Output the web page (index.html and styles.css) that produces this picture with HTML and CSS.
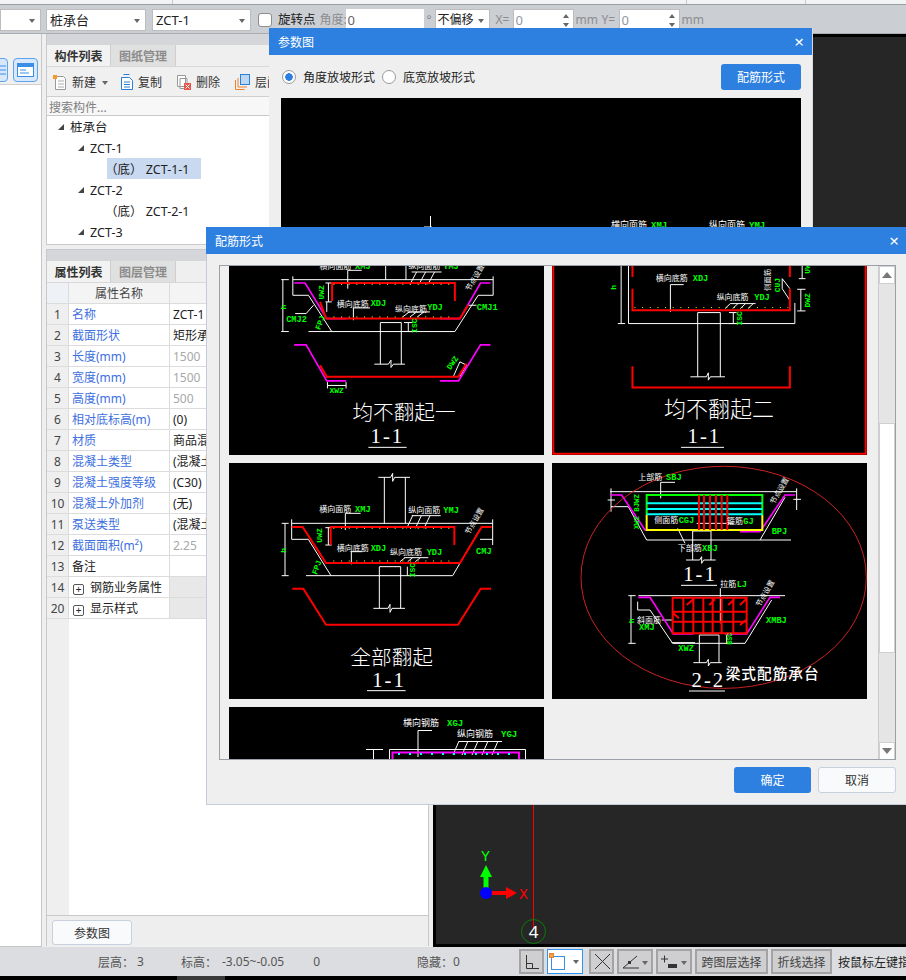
FILE: index.html
```html
<!DOCTYPE html>
<html lang="zh-CN">
<head>
<meta charset="utf-8">
<title>参数图</title>
<link rel="stylesheet" href="styles.css">
</head>
<body>
<div class="app">
  <div class="topstrip"><i class="tick t1"></i><i class="tick t2"></i><i class="tick t3"></i></div>
  <div class="toolbar">
    <div class="sel s1"><b class="caret"></b></div>
    <div class="sel s2"><span>桩承台</span><b class="caret"></b></div>
    <div class="sel s3"><span>ZCT-1</span><b class="caret"></b></div>
    <span class="check"></span>
    <span class="tlabel">旋转点</span>
    <span class="tlabel muted ang">角度:</span>
    <div class="inp i1">0</div>
    <span class="muted deg">°</span>
    <div class="sel s4"><span>不偏移</span><b class="caret"></b></div>
    <span class="muted xl">X=</span>
    <div class="inp i2">0<em class="spin"></em></div>
    <span class="muted mm">mm</span>
    <span class="muted yl">Y=</span>
    <div class="inp i2">0<em class="spin"></em></div>
    <span class="muted mm">mm</span>
  </div>

  <div class="main">
    <aside class="side">
      <div class="side-top">
        <span class="sbtn sb1"><svg width="12" height="14" viewBox="0 0 12 14"><path d="M2 3h9M2 7h9M2 11h9" stroke="#3a8ee6" fill="none"/></svg></span>
        <span class="sbtn sb2"><svg width="17" height="14" viewBox="0 0 17 14"><rect x=".5" y=".5" width="16" height="13" fill="#fff" stroke="#3a8ee6"/><rect x="1" y="1" width="15" height="3" fill="#3a8ee6"/><path d="M3 7h6M3 10h9" stroke="#3a8ee6" fill="none"/></svg></span>
      </div>
    </aside>

    <div class="panels">
      <section class="panel p1">
        <div class="phead"></div>
        <div class="tabs"><span class="tab on">构件列表</span><span class="tab">图纸管理</span></div>
        <div class="tools">
          <span class="tool tnew"><svg width="16" height="16" viewBox="0 0 16 16"><path d="M3.500 2.500h8l2 2v11h-10z" fill="#fff" stroke="#999"/><path d="M6 7h6M6 10h6M6 13h6" stroke="#aaa"/><rect x="1" y="1" width="4" height="4" fill="#f39a2e"/></svg>新建<b class="caret dark"></b></span>
          <span class="tool tcopy"><svg width="14" height="16" viewBox="0 0 14 16"><path d="M1.500 3.500h8l3 3v9h-11z" fill="#fff" stroke="#2c7fd6"/><path d="M3.500 .5h6" stroke="#2c7fd6"/><path d="M4 8h6M4 10.500h6M4 13h6" stroke="#2c7fd6"/></svg>复制</span>
          <span class="tool tdel"><svg width="15" height="16" viewBox="0 0 15 16"><path d="M.5 1.500h8v11h-8zM3 4.500h7v10H3z" fill="#fff" stroke="#999"/><rect x="7" y="9" width="7" height="7" fill="#e8534a"/><path d="M8.500 10.500l4 4m0-4l-4 4" stroke="#fff"/></svg>删除</span>
          <span class="tool tfloor"><svg width="15" height="16" viewBox="0 0 15 16"><path d="M.5 6v9.500h9M3 4v9h9" stroke="#f0812a" fill="none"/><rect x="5.500" y=".5" width="9" height="10" fill="#bcd6f5" stroke="#2c7fd6"/></svg>层间</span>
        </div>
        <div class="search">搜索构件...</div>
        <ul class="tree">
          <li class="l0"><b class="tri"></b>桩承台</li>
          <li class="l1"><b class="tri"></b>ZCT-1</li>
          <li class="l2"><span class="picked">（底） ZCT-1-1</span></li>
          <li class="l1"><b class="tri"></b>ZCT-2</li>
          <li class="l2"><span>（底） ZCT-2-1</span></li>
          <li class="l1"><b class="tri"></b>ZCT-3</li>
        </ul>
      </section>

      <section class="panel p2">
        <div class="phead"></div>
        <div class="tabs"><span class="tab on">属性列表</span><span class="tab">图层管理</span></div>
        <div class="grid">
          <div class="row head"><span class="n"></span><span class="k">属性名称</span><span class="v"></span></div>
          <div class="row"><span class="n">1</span><span class="k link">名称</span><span class="v">ZCT-1</span></div>
          <div class="row"><span class="n">2</span><span class="k link">截面形状</span><span class="v">矩形承台</span></div>
          <div class="row"><span class="n">3</span><span class="k link">长度(mm)</span><span class="v dim">1500</span></div>
          <div class="row"><span class="n">4</span><span class="k link">宽度(mm)</span><span class="v dim">1500</span></div>
          <div class="row"><span class="n">5</span><span class="k link">高度(mm)</span><span class="v dim">500</span></div>
          <div class="row"><span class="n">6</span><span class="k link">相对底标高(m)</span><span class="v">(0)</span></div>
          <div class="row"><span class="n">7</span><span class="k link">材质</span><span class="v">商品混凝土</span></div>
          <div class="row"><span class="n">8</span><span class="k link">混凝土类型</span><span class="v">(混凝土)</span></div>
          <div class="row"><span class="n">9</span><span class="k link">混凝土强度等级</span><span class="v">(C30)</span></div>
          <div class="row"><span class="n">10</span><span class="k link">混凝土外加剂</span><span class="v">(无)</span></div>
          <div class="row"><span class="n">11</span><span class="k link">泵送类型</span><span class="v">(混凝土泵)</span></div>
          <div class="row"><span class="n">12</span><span class="k link">截面面积(m²)</span><span class="v dim">2.25</span></div>
          <div class="row"><span class="n">13</span><span class="k">备注</span><span class="v"></span></div>
          <div class="row grp"><span class="n">14</span><span class="k"><b class="plus">+</b>钢筋业务属性</span><span class="v"></span></div>
          <div class="row grp"><span class="n">20</span><span class="k"><b class="plus">+</b>显示样式</span><span class="v"></span></div>
          <div class="rest"><span class="n"></span></div>
        </div>
        <div class="pfoot"><button class="btn-plain pbtn">参数图</button></div>
      </section>
    </div>

    <div class="canvas">
      <svg class="axes" width="80" height="70" viewBox="0 0 80 70">
        <path d="M23 33v20" stroke="#0f0" stroke-width="5"/>
        <path d="M23 25l-6 12h12z" fill="#0f0"/>
        <path d="M23 53h22" stroke="#f00" stroke-width="4"/>
        <path d="M43 47l11 6-11 6z" fill="#f00"/>
        <circle cx="23" cy="53" r="6" fill="#00f"/>
        <text class="ax axy" x="18" y="21">Y</text>
        <text class="ax axx" x="56" y="59">X</text>
      </svg>
      <div class="gridline"></div>
      <div class="bubble">4</div>
    </div>
  </div>

  <div class="status">
    <span class="st a">层高：</span><span class="st b">3</span>
    <span class="st c">标高：</span><span class="st d">-3.05~-0.05</span>
    <span class="st e">0</span>
    <span class="st f">隐藏：</span><span class="st g">0</span>
    <span class="sb ortho"><svg width="16" height="16" viewBox="0 0 16 16"><path d="M2.500 1v13.500H15M2.500 9.500h6v5" stroke="#333" fill="none"/></svg></span>
    <span class="sb snap"><svg width="18" height="18" viewBox="0 0 18 18"><rect x="2.500" y="3.500" width="13" height="13" fill="none" stroke="#3a8ee6"/><rect x=".5" y=".5" width="4" height="4" fill="#f5a04a" stroke="#e8812a"/></svg><b class="caret dark"></b></span>
    <span class="sb cross"><svg width="17" height="17" viewBox="0 0 17 17"><path d="M1 1l15 15M16 1L1 16" stroke="#333" fill="none"/></svg></span>
    <span class="sb angle"><svg width="17" height="14" viewBox="0 0 17 14"><path d="M1 13L15 1M1 13h16" stroke="#333" fill="none"/><rect x="6" y="6" width="3" height="3" fill="#333"/></svg><b class="caret dark"></b></span>
    <span class="sb elev"><svg width="17" height="14" viewBox="0 0 17 14"><path d="M0 4h7M3.500 .5v7" stroke="#333" fill="none"/><rect x="7" y="9" width="9" height="4" fill="#333"/></svg><b class="caret dark"></b></span>
    <span class="sb tx cl">跨图层选择</span>
    <span class="sb tx pl">折线选择</span>
    <span class="hint">按鼠标左键指定</span>
  </div>
  <div class="taskbar"><i></i></div>

  <div class="dialog d-param">
    <header class="dtitle"><span>参数图</span><span class="x">×</span></header>
    <div class="dopts">
      <span class="radio on"></span><span class="rlabel">角度放坡形式</span>
      <span class="radio"></span><span class="rlabel">底宽放坡形式</span>
      <button class="btn-blue rebar">配筋形式</button>
    </div>
    <div class="preview">
      <svg width="520" height="130" viewBox="281 98 520 130">
        <path class="w1" d="M430.500 216v11M424 227h8"/>
        <text class="cadw s9" x="611" y="228">横向面筋</text><text class="cadg s9" x="651" y="228">XMJ</text>
        <text class="cadw s9" x="709" y="228">纵向面筋</text><text class="cadg s9" x="749" y="228">YMJ</text>
      </svg>
    </div>
  </div>

  <div class="dialog d-rebar">
    <header class="dtitle"><span>配筋形式</span><span class="x">×</span></header>
    <div class="rbody">
      <div class="scroller">
        <div class="cards">
          <div class="card c-a">
            <svg width="315" height="189" viewBox="27 17 945 568">
              <g class="w3">
                <path d="M218 58H820M497 17V58M558 17V58M183 58H206M183 214H206M188 58V214M218 48V105H265L335 214M820 48V105H775L705 214M265 214H705"/>
                <path d="M481 312V187H544V312M463 312H505L513 300V322L520 312H555M565 187V214M552 187H578M552 214H578"/>
                <path d="M322 366V385M378 366V385M322 376H378M320 125V155M316 68H335M316 125H335M325 68V125"/>
                <path d="M383 85V30H425M400 180V143H450M570 72L590 35M597 72L617 35M624 72L644 35M575 35H665M548 170L568 155M570 170L590 155M592 170L612 155M562 155H630M225 160H258L280 135M745 135H770M700 350L720 305L740 315L720 350"/>
              </g>
              <g class="m5"><path d="M222 68H255L320 175H378M660 175H720L782 68H812M222 254H258L320 362H378M660 362H716L782 254H812"/></g>
              <g class="r5"><path d="M336 122V68H705V122M300 125L318 175H720L745 135M300 315L320 350H715L740 310"/></g>
              <path class="dots" d="M340 72H700M340 170H700"/>
              <text class="cadw s24" x="298" y="26">横向面筋</text><text class="cadw s24" x="565" y="26">纵向面筋</text><text class="cadg s26" x="405" y="26">XMJ</text><text class="cadg s26" x="670" y="26">YMJ</text>
              <text class="cadw s24" x="350" y="140">横向底筋</text><text class="cadg s26" x="452" y="138">XDJ</text>
              <text class="cadw s24" x="525" y="156">纵向底筋</text><text class="cadg s26" x="622" y="150">YDJ</text>
              <text class="cadg s26" x="771" y="150">CMJ1</text><text class="cadg s26" x="198" y="186">CMJ2</text>
              <text class="cadg s24" x="328" y="400">XWZ</text>
              <text class="cadg s24" transform="translate(312 118) rotate(-90)">UWZ</text>
              <text class="cadg s24" transform="translate(196 148) rotate(-90)">h</text>
              <text class="cadg s24" transform="translate(300 210) rotate(-70)">FPJ</text>
              <text class="cadg s24" transform="translate(590 218) rotate(-90)">ISC</text>
              <text class="cadg s24" transform="translate(692 330) rotate(-55)">DWZ</text>
              <text class="cadw s22" transform="translate(750 94) rotate(-60)">节点设置</text>
              <text class="cap s62" x="552" y="480">均不翻起一</text>
              <text class="capn" x="502" y="549">1-1</text>
              <path class="w3" d="M445 562H560"/>
            </svg>
          </div>
          <div class="card c-b">
            <svg width="315" height="189" viewBox="21 17 945 568">
              <g class="w3">
                <path d="M250 17V190H750V128M228 17V190M218 190H240M458 350V157H526V350M436 350H484L490 338V360L496 350H540M565 157V190M552 157H575M552 190H575"/>
                <path d="M768 87V152M757 87H782M757 152H782M772 17V55M762 55H782M376 155V73H416M540 145L556 130M563 145L579 130M586 145L602 130M609 145L625 130M556 130H632M712 55L735 85M712 85L735 120M712 55V85"/>
              </g>
              <g class="r5"><path d="M262 17V50M262 85V150H735V85M735 17V50M262 318V382H735V318"/></g>
              <path class="dots" d="M268 142H730"/>
              <text class="cadw s24" x="332" y="63">横向底筋</text><text class="cadg s26" x="443" y="63">XDJ</text>
              <text class="cadw s24" x="515" y="119">纵向底筋</text><text class="cadg s26" x="628" y="119">YDJ</text>
              <text class="cadg s24" transform="translate(212 88) rotate(-90)">h</text>
              <text class="cadg s24" transform="translate(590 196) rotate(-90)">ISC</text>
              <text class="cadg s24" transform="translate(796 142) rotate(-90)">DWZ</text>
              <text class="cadg s24" transform="translate(796 40) rotate(-90)">UWY</text>
              <text class="cadg s24" transform="translate(704 96) rotate(-90)">CUJ</text>
              <text class="cadw s22" transform="translate(676 92) rotate(-90)">侧面筋</text>
              <text class="cap s66" x="522" y="470">均不翻起二</text>
              <text class="capn" x="478" y="548">1-1</text>
              <path class="w3" d="M408 562H537"/>
              <path class="redframe" d="M24 17V581H963V17"/>
            </svg>
          </div>
          <div class="card c-c">
            <svg width="315" height="236" viewBox="27 9 945 708">
              <g class="w3">
                <path d="M215 190H818M493 190V52M556 190V52M475 52H512L518 40V64L524 52H570M195 190V347M185 190H206M185 347H206M215 178V238H265L333 347M818 178V255M818 238H780M780 207L698 347M258 347H698"/>
                <path d="M478 445V320H542V445M460 445H504L510 433V457L516 445H555M562 320V347M376 210V160H422M394 313V275H428M560 205L578 167M586 205L604 167M612 205L630 167M575 167H662M540 305L555 293M563 305L578 293M586 305L601 293M553 293H625M325 203V255M316 203H335M316 255H335"/>
              </g>
              <g class="r5"><path d="M215 201H248L318 309H720L785 201H815M332 255V201H703V255M217 386H250L318 494H714L782 386H813"/></g>
              <path class="dots" d="M340 205H700M340 303H700"/>
              <text class="cadw s24" x="298" y="155">横向面筋</text><text class="cadg s26" x="405" y="155">XMJ</text>
              <text class="cadw s24" x="565" y="158">纵向面筋</text><text class="cadg s26" x="670" y="158">YMJ</text>
              <text class="cadw s24" x="350" y="272">横向底筋</text><text class="cadg s26" x="452" y="272">XDJ</text>
              <text class="cadw s24" x="510" y="284">纵向底筋</text><text class="cadg s26" x="620" y="284">YDJ</text>
              <text class="cadg s26" x="768" y="281">CMJ</text>
              <text class="cadg s24" transform="translate(306 248) rotate(-90)">UWZ</text>
              <text class="cadg s24" transform="translate(198 278) rotate(-90)">h</text>
              <text class="cadg s24" transform="translate(290 345) rotate(-70)">FPJ</text>
              <text class="cadg s24" transform="translate(586 352) rotate(-90)">ISC</text>
              <text class="cadw s22" transform="translate(748 225) rotate(-60)">节点设置</text>
              <text class="cap s62" x="515" y="614">全部翻起</text>
              <text class="capn" x="507" y="681">1-1</text>
              <path class="w3" d="M441 692H557"/>
            </svg>
          </div>
          <div class="card c-d">
            <svg width="315" height="236" viewBox="21 9 945 708">
              <g class="w3">
                <path d="M195 95H755M198 85V155M755 85V150M188 120H210M745 118H768M198 140H250L305 240H738M720 112L645 240M443 300V213H498V300M423 300H464L470 290V310L476 300H512M347 115V67H390M398 205L420 250M455 190H565"/>
                <path d="M280 407H720M258 407V550M250 407H272M250 550H272M278 425V450H315L383 550H600L680 420M463 608V525H522V608M445 608H484L490 598V618L496 608H530M526 490V385M380 548H450M545 525V552M350 480H385"/>
              </g>
              <g class="m5"><path d="M197 105H230L300 210H360M585 215H645L720 105H750M280 412H315L385 522H445M540 522H605L675 412H705"/></g>
              <g class="gr5"><path d="M305 165V105H652V165"/></g>
              <g class="ye5"><path d="M305 165V210H652V165"/></g>
              <g class="cy5"><path d="M305 130H652M305 147H652M305 163H652"/></g>
              <g class="r5"><path d="M462 105V210M477 105V210M495 105V210M513 105V210M530 105V210M547 105V210M383 413H605V520H383ZM415 413V520M445 413V520M475 413V520M503 413V520M530 413V520M565 413V520M383 455H605M383 485H605M425 435L445 418M493 435L510 418M550 435L568 418M585 435L603 418M385 460L402 475M585 495L603 480"/></g>
              <path class="ell" d="M108 352A428 333 0 1 0 964 352A428 333 0 1 0 108 352Z"/>
              <text class="cadw s24" x="280" y="61">上部筋</text><text class="cadg s26" x="363" y="61">SBJ</text>
              <text class="cadw s24" x="328" y="189">侧面筋</text><text class="cadg s26" x="401" y="189">CGJ</text>
              <text class="cadw s24" x="546" y="191">箍筋</text><text class="cadg s26" x="595" y="191">GJ</text>
              <text class="cadw s24" x="398" y="273">下部筋</text><text class="cadg s26" x="471" y="273">XBJ</text>
              <text class="cadg s26" x="680" y="221">BPJ</text>
              <text class="cadg s22" transform="translate(282 208) rotate(-90)">XWZ BJWZ</text>
              <text class="cadw s22" transform="translate(688 134) rotate(-60)">节点设置</text>
              <text class="capn" x="465" y="362">1-1</text>
              <path class="w3" d="M408 376H516"/>
              <text class="cadw s24" x="526" y="381">拉筋</text><text class="cadg s26" x="575" y="381">LJ</text>
              <text class="cadw s24" x="276" y="488">斜面筋</text><text class="cadg s26" x="282" y="511">XMJ</text>
              <text class="cadg s26" x="663" y="490">XMBJ</text><text class="cadg s26" x="400" y="574">XWZ</text>
              <text class="cadg s24" transform="translate(266 490) rotate(-90)">h</text>
              <text class="cadg s20" transform="translate(562 554) rotate(-90)">BSC</text>
              <text class="cadw s22" transform="translate(645 442) rotate(-60)">节点设置</text>
              <text class="capn" x="490" y="680">2-2</text>
              <path class="w3" d="M432 693H540"/>
              <text class="title44" x="542" y="658">梁式配筋承台</text>
            </svg>
          </div>
          <div class="card c-e">
            <svg width="315" height="53" viewBox="229 707 315 53">
              <text class="cadw s9" x="403" y="726">横向钢筋</text><text class="cadg s9" x="447" y="726">XGJ</text>
              <text class="cadw s9" x="457" y="737">纵向钢筋</text><text class="cadg s9" x="501" y="737">YGJ</text>
              <path class="w1" d="M418 757V730.500H432M459 741.500H502M453 755L459 741M462 755L468 741M472 755L478 741M482 755L488 741M492 755L498 741M366 749.500H383M373.500 749V760M389.500 760V749.500H525.500V760"/>
              <path class="m2" d="M392.500 760V752.500H519V760"/>
              <path class="dotc" d="M398 754H518"/>
            </svg>
          </div>
        </div>
        <div class="scrollbar">
          <span class="sc-btn"><b class="up"></b></span>
          <span class="sc-track t-a"></span>
          <span class="sc-thumb"></span>
          <span class="sc-track t-b"></span>
          <span class="sc-btn"><b class="down"></b></span>
        </div>
      </div>
      <div class="dfoot">
        <button class="btn-blue ok">确定</button>
        <button class="btn-plain cancel">取消</button>
      </div>
    </div>
  </div>
</div>
</body>
</html>
```
FILE: styles.css
```css
* { box-sizing: border-box; }
html, body { margin: 0; padding: 0; }
body { font-family: "Noto Sans", "Noto Sans CJK SC", sans-serif; font-size: 12px; color: #222; background: #fff; }
svg { display: block; }
.app { position: relative; width: 906px; height: 980px; overflow: hidden; display: flex; flex-direction: column; background: #efefef; }

/* top */
.topstrip { position: relative; height: 5px; background: #f2f3f4; border-bottom: 1px solid #9a9ea3; flex: none; }
.tick { position: absolute; top: 0; width: 1px; height: 4px; background: #c8c8c8; }
.t1 { left: 172px; } .t2 { left: 686px; } .t3 { left: 805px; }
.toolbar { height: 29px; flex: none; display: flex; align-items: flex-start; padding-top: 4px; background: #cbced2; border-bottom: 1px solid #a9acb0; font-size: 13px; white-space: nowrap; }
.toolbar > * { flex: none; }
.sel { position: relative; height: 22px; background: #fff; border: 1px solid #bdbdbd; line-height: 20px; padding-left: 3px; }
.caret { position: absolute; right: 5px; top: 9px; width: 0; height: 0; border: 3.500px solid transparent; border-top: 4px solid #666; border-bottom: 0; }
.s1 { width: 41px; } .s2 { width: 100px; margin-left: 5px; } .s3 { width: 99px; margin-left: 6px; }
.s4 { width: 55px; padding-left: 2px; font-size: 12px; }
.check { width: 14px; height: 14px; margin: 4px 0 0 7px; border: 1px solid #8d8d8d; border-radius: 3px; background: #fff; }
.tlabel { line-height: 22px; }
.check + .tlabel { margin-left: 6px; font-size: 12.500px; }
.muted { color: #8b8d90; line-height: 22px; font-size: 12px; }
.ang { margin-left: 4px; width: 26px; }
.inp { position: relative; height: 22px; background: #fff; line-height: 22px; padding-left: 2px; color: #666; }
.i1 { width: 78px; }
.i2 { width: 61px; border: 1px solid #bdbdbd; line-height: 20px; color: #8f99a5; }
.spin { position: absolute; right: 3px; top: 3px; width: 7px; height: 14px; }
.spin::before, .spin::after { content: ""; position: absolute; left: 0; width: 0; height: 0; border-left: 3.500px solid transparent; border-right: 3.500px solid transparent; }
.spin::before { top: 1px; border-bottom: 4px solid #666; }
.spin::after { bottom: 0; border-top: 4px solid #666; }
.deg { margin-left: 3px; width: 8px; }
.xl { margin-left: 6px; width: 17px; }
.yl { margin-left: 2px; width: 17px; }
.mm { margin-left: 2px; width: 24px; }

/* main */
.main { flex: 1; display: flex; min-height: 0; }
.side { width: 42px; flex: none; background: #fff; border-right: 1px solid #c6c6c6; border-bottom: 1px solid #c6c6c6; height: 913px; }
.side-top { position: relative; height: 51px; background: #f0f0f0; border-bottom: 1px solid #d0d0d0; overflow: hidden; }
.sbtn { position: absolute; top: 24px; height: 24px; border: 1px solid #5aa5ee; border-radius: 4px; background: #d8e8fa; display: flex; align-items: center; justify-content: center; }
.sb1 { left: -6px; width: 14px; }
.sb2 { left: 13px; width: 25px; }
.panels { width: 383px; margin-left: 4px; flex: none; display: flex; flex-direction: column; gap: 4px; }
.panel { display: flex; flex-direction: column; background: #efefef; }
.p1 { height: 211px; border: 1px solid #c6c9cd; border-top: 0; }
.p2 { height: 697px; border-left: 1px solid #c6c9cd; border-right: 1px solid #c6c9cd; border-top: 1px solid #c6c9cd; }
.phead { height: 11px; background: #d4d6da; flex: none; }
.tabs { height: 22px; display: flex; flex: none; border-bottom: 1px solid #d8d8d8; }
.tab { width: 65px; text-align: center; line-height: 24px; color: #8c8c8c; background: #e0e0e0; border-right: 1px solid #cfcfcf; font-size: 12px; font-weight: 700; }
.tab.on { width: 64px; background: #f2f2f2; color: #333; }
.tools { position: relative; height: 30px; flex: none; background: #f0f0f0; border-bottom: 1px solid #cfcfcf; }
.tool { position: absolute; top: 7px; display: flex; align-items: center; gap: 4px; height: 16px; color: #333; white-space: nowrap; }
.tnew { left: 5px; } .tcopy { left: 73px; gap: 4px; } .tdel { left: 130px; gap: 4px; } .tfloor { left: 188px; gap: 5px; }
.tnew .caret { right: -12px; top: 7px; }
.search { height: 19px; flex: none; line-height: 21px; padding-left: 2px; color: #808080; background: #f7f7f7; border-bottom: 1px solid #c9c9c9; }
.tree { list-style: none; margin: 0; padding: 0; flex: 1; background: #fff; font-size: 12.500px; }
.tree li { position: relative; height: 21px; line-height: 23px; white-space: nowrap; }
.l0 { padding-left: 23px; } .l1 { padding-left: 43px; } .l2 { padding-left: 60px; }
.tri { position: absolute; top: 8px; width: 0; height: 0; border-bottom: 6px solid #444; border-left: 6px solid transparent; }
.l0 .tri { left: 11px; } .l1 .tri { left: 31px; }
.tree .l2 span { display: inline-block; height: 21px; text-indent: -2px; }
.tree .picked { background: #c9d9f0; width: 94px; }

/* grid */
.grid { flex: 1; display: flex; flex-direction: column; background: #fff; border-bottom: 1px solid #c6c9cd; min-height: 0; }
.row { height: 21px; flex: none; display: flex; line-height: 22px; font-size: 12px; }
.n { width: 22px; flex: none; text-align: center; background: #efefef; color: #444; border-right: 1px solid #dcdcdc; border-bottom: 1px solid #dcdcdc; }
.k { width: 101px; flex: none; padding-left: 3px; border-right: 1px solid #dcdcdc; border-bottom: 1px solid #dcdcdc; white-space: nowrap; }
.v { flex: 1; padding-left: 3px; border-bottom: 1px solid #dcdcdc; white-space: nowrap; overflow: hidden; }
.head .n { background: #eef1f6; }
.head .k { text-align: center; background: #f4f4f4; padding: 0; color: #444; }
.head .v { background: #f4f4f4; }
.link { color: #3d6fe0; }
.dim { color: #a8a8a8; }
.grp .v { background: #e8e8e8; }
.plus { display: inline-block; width: 11px; height: 11px; margin: 0 6px 0 1px; border: 1px solid #555; border-radius: 2px; line-height: 8px; text-align: center; font-weight: 400; font-size: 10px; vertical-align: -1px; }
.rest { flex: 1; display: flex; }
.rest .n { border: 0; }
.pfoot { height: 30px; flex: none; background: #eee; padding: 4px 0 0 5px; }
button { font-family: inherit; font-size: 12px; padding: 0; cursor: default; }
.btn-plain { background: #f9fafb; border: 1px solid #c8d0de; border-radius: 3px; color: #333; }
.btn-blue { background: #2d7fe0; border: 0; border-radius: 3px; color: #fff; }
.pbtn { width: 80px; height: 25px; }

/* canvas */
.canvas { position: relative; flex: 1; margin-left: 4px; height: 913px; background: #262626; border: solid #000; border-width: 3px 0 3px 3px; }
.axes { position: absolute; left: 27px; top: 803px; }
.ax { font-family: "Liberation Mono", monospace; font-size: 15px; }
.axy { fill: #0f0; } .axx { fill: #f00; }
.gridline { position: absolute; left: 97px; top: 0; width: 1px; height: 892px; background: #f00; }
.bubble { position: absolute; left: 85px; top: 882px; width: 25px; height: 25px; border: 1px solid #0a7a0a; border-radius: 50%; color: #fff; font-size: 17px; line-height: 23px; text-align: center; }

/* status */
.status { position: relative; height: 29px; flex: none; display: flex; align-items: center; background: #dcdde0; color: #555; font-size: 12px; white-space: nowrap; }
.st { flex: none; }
.a { margin-left: 98px; } .b { margin-left: 3px; } .c { margin-left: 37px; } .d { margin-left: 5px; } .e { margin-left: 29px; } .f { margin-left: 97px; } .g { margin-left: 0; }
.sb { position: relative; flex: none; height: 25px; background: #cfcfd1; border: 2px solid #a3a3a3; display: flex; align-items: center; padding-left: 3px; }
.ortho { width: 25px; margin-left: 59px; }
.snap { width: 36px; margin-left: 3px; background: #fff; border: 1px solid #2b93f0; padding-left: 1px; }
.cross { width: 25px; margin-left: 6px; }
.angle { width: 36px; margin-left: 3px; }
.elev { width: 36px; margin-left: 3px; }
.sb .caret { right: 3px; top: 10px; }
.tx { justify-content: center; padding: 0; color: #444; }
.cl { width: 73px; margin-left: 3px; }
.pl { width: 61px; margin-left: 3px; }
.hint { margin-left: 6px; color: #222; }
.taskbar { height: 4px; flex: none; background: #000; padding-left: 177px; }
.taskbar i { display: block; width: 48px; height: 4px; background: #3a3a3a; }

/* dialogs */
.dialog { position: absolute; background: #efefef; }
.dtitle { height: 27px; display: flex; align-items: center; justify-content: space-between; padding: 0 8px 0 9px; background: #2d7fe0; color: #fff; font-size: 12px; }
.x { font-size: 17px; line-height: 1; }
.d-param { left: 269px; top: 28px; width: 544px; height: 210px; border-right: 1px solid #d8dadd; }
.dopts { display: flex; align-items: center; height: 43px; padding: 0 11px 0 13px; font-size: 12px; }
.radio { width: 14px; height: 14px; border: 1px solid #9a9a9a; border-radius: 50%; background: #fff; }
.radio.on { background: radial-gradient(circle, #2d7fe0 0 3.500px, #fff 4px); }
.rlabel { margin: 0 7px 0 7px; color: #222; }
.rebar { margin-left: auto; width: 80px; height: 26px; }
.preview { width: 520px; height: 130px; margin-left: 12px; background: #000; overflow: hidden; }
.d-rebar { left: 206px; top: 227px; width: 710px; height: 578px; border: 1px solid #c4ccd8; border-top: 0; }
.d-rebar .dtitle { padding-right: 16px; margin-left: -1px; }
.rbody { padding: 11px 0 0 12px; }
.scroller { width: 677px; height: 495px; display: flex; border: 1px solid #9aa0a6; background: #efefef; overflow: hidden; }
.cards { width: 658px; padding-left: 9px; display: grid; grid-template-columns: 315px 315px; grid-template-rows: 189px 236px 53px; gap: 8px; }
.card { background: #000; overflow: hidden; }
.scrollbar { width: 17px; flex: none; margin-left: 1px; display: flex; flex-direction: column; background: #e5e5e5; border-left: 1px solid #ccc; }
.sc-btn { height: 18px; flex: none; background: #fff; border: 1px solid #d0d0d0; display: flex; align-items: center; justify-content: center; }
.up, .down { width: 0; height: 0; border-left: 5px solid transparent; border-right: 5px solid transparent; }
.up { border-bottom: 6px solid #777; } .down { border-top: 6px solid #777; }
.t-a { height: 139px; flex: none; } .t-b { height: 89px; flex: none; }
.sc-thumb { height: 230px; flex: none; background: #fff; border: 1px solid #cfcfcf; }
.dfoot { display: flex; justify-content: flex-end; gap: 7px; padding-top: 7px; width: 677px; }
.ok, .cancel { height: 26px; }
.ok { width: 77px; } .cancel { width: 78px; }

/* CAD */
.w1, .w3, .m5, .m2, .r5, .gr5, .ye5, .cy5, .redframe, .ell, .dots, .dotc { fill: none; }
.w1 { stroke: #fff; stroke-width: 1; }
.w3 { stroke: #fff; stroke-width: 3; }
.m5 { stroke: #f0f; stroke-width: 5; }
.m2 { stroke: #f0f; stroke-width: 2; }
.r5 { stroke: #f00; stroke-width: 6; }
.gr5 { stroke: #0f0; stroke-width: 6; }
.ye5 { stroke: #ff0; stroke-width: 6; }
.cy5 { stroke: #0ff; stroke-width: 6; }
.redframe { stroke: #f00; stroke-width: 6; }
.ell { stroke: #c22; stroke-width: 3; }
.dots { stroke: #ff0; stroke-width: 3; stroke-dasharray: 3 20; }
.dotc { stroke: #0ff; stroke-width: 2; stroke-dasharray: 2 9; }
.cadw { fill: #fff; font-family: "Noto Sans CJK SC", sans-serif; }
.cadg { fill: #0f0; font-family: "Liberation Mono", monospace; font-weight: 700; }
.cap { fill: #fff; font-family: "Noto Sans CJK SC", sans-serif; font-weight: 300; text-anchor: middle; }
.capn { fill: #fff; font-family: "Liberation Serif", serif; font-size: 62px; letter-spacing: 6px; text-anchor: middle; }
.title44 { fill: #fff; font-family: "Noto Sans CJK SC", sans-serif; font-size: 44px; font-weight: 500; letter-spacing: 3px; }
.s9 { font-size: 9px; }
.s20 { font-size: 20px; } .s22 { font-size: 22px; } .s24 { font-size: 24px; } .s26 { font-size: 26px; }
.s62 { font-size: 62px; } .s66 { font-size: 66px; }
```
